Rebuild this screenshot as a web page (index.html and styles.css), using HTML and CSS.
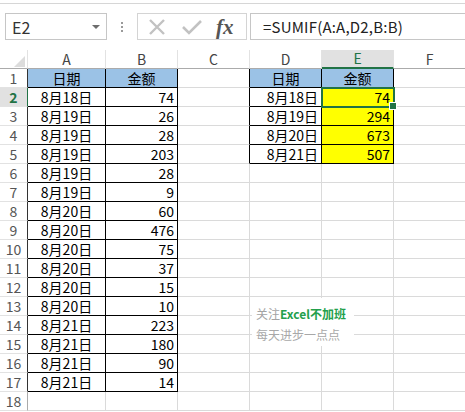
FILE: index.html
```html
<!DOCTYPE html>
<html>
<head>
<meta charset="utf-8">
<link rel="stylesheet" href="styles.css">
</head>
<body>
<div class="topline"></div>
<div class="fbar">
  <div class="namebox"><span>E2</span><svg width="8" height="6" viewBox="0 0 8 6"><path d="M0 1h8L4 5z" fill="#6d6d6d"/></svg></div>
  <div class="dots"><i></i><i></i><i></i></div>
  <div class="fbtns">
    <svg width="20" height="16" viewBox="0 0 20 16"><path d="M3 1l14 14M17 1L3 15" stroke="#c2c2c2" stroke-width="2.4" fill="none"/></svg>
    <svg width="22" height="16" viewBox="0 0 22 16"><path d="M2 8l6 6L20 2" stroke="#c2c2c2" stroke-width="2.6" fill="none"/></svg>
    <span class="fx">fx</span>
  </div>
  <div class="formula">=SUMIF(A:A,D2,B:B)</div>
</div>
<table class="sheet">
  <colgroup><col class="w0"><col class="wa"><col class="wn"><col class="wn"><col class="wn"><col class="wn"><col class="wn"></colgroup>
  <tr class="hrow"><td class="corner"><svg width="11" height="11" viewBox="0 0 11 11"><path d="M11 0v11H0z" fill="#dcdcdc"/></svg></td><td class="ch">A</td><td class="ch">B</td><td class="ch">C</td><td class="ch">D</td><td class="ch csel">E</td><td class="ch">F</td></tr>
  <tr><td class="rh kr">1</td><td class="k hd">日期</td><td class="k hd">金额</td><td class="kr"></td><td class="k hd">日期</td><td class="k hd">金额</td><td></td></tr>
  <tr><td class="rh rsel">2</td><td class="k c">8月18日</td><td class="k r">74</td><td class="kr"></td><td class="k r">8月18日</td><td class="k r y cur">74</td><td></td></tr>
  <tr><td class="rh kr">3</td><td class="k c">8月19日</td><td class="k r">26</td><td class="kr"></td><td class="k r">8月19日</td><td class="k r y">294</td><td></td></tr>
  <tr><td class="rh kr">4</td><td class="k c">8月19日</td><td class="k r">28</td><td class="kr"></td><td class="k r">8月20日</td><td class="k r y">673</td><td></td></tr>
  <tr><td class="rh kr">5</td><td class="k c">8月19日</td><td class="k r">203</td><td class="kr"></td><td class="k r">8月21日</td><td class="k r y">507</td><td></td></tr>
  <tr><td class="rh kr">6</td><td class="k c">8月19日</td><td class="k r">28</td><td></td><td></td><td></td><td></td></tr>
  <tr><td class="rh kr">7</td><td class="k c">8月19日</td><td class="k r">9</td><td></td><td></td><td></td><td></td></tr>
  <tr><td class="rh kr">8</td><td class="k c">8月20日</td><td class="k r">60</td><td></td><td></td><td></td><td></td></tr>
  <tr><td class="rh kr">9</td><td class="k c">8月20日</td><td class="k r">476</td><td></td><td></td><td></td><td></td></tr>
  <tr><td class="rh kr">10</td><td class="k c">8月20日</td><td class="k r">75</td><td></td><td></td><td></td><td></td></tr>
  <tr><td class="rh kr">11</td><td class="k c">8月20日</td><td class="k r">37</td><td></td><td></td><td></td><td></td></tr>
  <tr><td class="rh kr">12</td><td class="k c">8月20日</td><td class="k r">15</td><td></td><td></td><td></td><td></td></tr>
  <tr><td class="rh kr">13</td><td class="k c">8月20日</td><td class="k r">10</td><td></td><td></td><td></td><td></td></tr>
  <tr><td class="rh kr">14</td><td class="k c">8月21日</td><td class="k r">223</td><td></td><td></td><td></td><td></td></tr>
  <tr><td class="rh kr">15</td><td class="k c">8月21日</td><td class="k r">180</td><td></td><td></td><td></td><td></td></tr>
  <tr><td class="rh kr">16</td><td class="k c">8月21日</td><td class="k r">90</td><td></td><td></td><td></td><td></td></tr>
  <tr><td class="rh kr">17</td><td class="k c">8月21日</td><td class="k r">14</td><td></td><td></td><td></td><td></td></tr>
  <tr><td class="rh">18</td><td></td><td></td><td></td><td></td><td></td><td></td></tr>
</table>
<div class="watermark">
  <div class="wm1">关注<b>Excel不加班</b></div>
  <div class="wm2">每天进步一点点</div>
</div>
</body>
</html>
```
FILE: styles.css
```css
* { box-sizing: border-box; }
html, body { margin: 0; padding: 0; background: #fff; overflow: hidden; }
body {
  width: 465px;
  height: 412px;
  position: relative;
  font-family: "Noto Sans CJK SC", "Noto Sans", sans-serif;
  color: #000;
}
.topline { height: 4px; border-bottom: 1px solid #d6d6d6; }
.fbar {
  display: flex;
  align-items: center;
  margin-top: 9px;
  height: 27px;
}
.namebox {
  margin-left: 5px;
  width: 102px;
  height: 27px;
  border: 1px solid #c6c6c6;
  display: flex;
  align-items: center;
  justify-content: space-between;
  padding: 0 6px 0 6px;
  font-size: 16px;
  color: #333;
}
.dots {
  width: 30px;
  display: flex;
  flex-direction: column;
  align-items: center;
  gap: 2px;
}
.dots i { width: 2px; height: 2px; background: #9a9a9a; display: block; }
.fbtns {
  width: 110px;
  height: 27px;
  border: 1px solid #d4d4d4;
  display: flex;
  align-items: center;
  padding-left: 9px;
  gap: 14px;
}
.fx {
  font-family: "Liberation Serif", serif;
  font-style: italic;
  font-weight: bold;
  font-size: 21px;
  color: #555;
  line-height: 20px;
  margin-left: -1px;
}
.formula {
  margin-left: 3px;
  flex: 1;
  height: 27px;
  border: 1px solid #c6c6c6;
  border-right: none;
  padding-left: 12px;
  font-size: 15px;
  letter-spacing: 0.2px;
  line-height: 25px;
  color: #222;
  white-space: nowrap;
}
.sheet {
  margin-top: 10px;
  border-collapse: separate;
  border-spacing: 0;
  table-layout: fixed;
  width: 466px;
}
.w0 { width: 28px; }
.wa { width: 78px; }
.wn { width: 72px; }
.sheet td {
  height: 19px;
  padding: 0 3px;
  border-right: 1px solid #dadada;
  border-bottom: 1px solid #dadada;
  font-size: 14px;
  line-height: 17px;
  white-space: nowrap;
  vertical-align: middle;
}
.sheet tr { height: 19px; }
.hrow td {
  border-right-color: #e2e2e2;
  border-bottom: 1px solid #ababab;
  color: #444;
  text-align: center;
  font-size: 14px;
}
.corner { text-align: right !important; vertical-align: bottom !important; padding: 0 2px 1px 0 !important; line-height: 0 !important; }
.ch.csel { background: #e1e1e1; color: #217346; border-bottom: 2px solid #217346; }
.sheet td.rh {
  color: #555;
  text-align: center;
  padding: 0;
  border-right-color: #ababab;
  border-bottom-color: #e2e2e2;
}
.sheet td.rh.kr { border-right-color: #333; }
.sheet td.rsel {
  background: #e1e1e1;
  color: #217346;
  font-weight: bold;
  border-right: 1px solid #217346;
}
.sheet td.k { border-right-color: #000; border-bottom-color: #000; }
.sheet td.kr { border-right-color: #000; }
.hd { background: #9bc2e6; text-align: center; }
.c { text-align: center; }
.r { text-align: right; }
.y { background: #ffff00; }
.cur {
  position: relative;
  outline: 2px solid #217346;
  outline-offset: -1px;
}
.cur::after {
  content: "";
  position: absolute;
  right: -4px;
  bottom: -4px;
  width: 6px;
  height: 6px;
  background: #217346;
  border: 1px solid #fff;
}
.watermark {
  position: absolute;
  left: 252px;
  top: 298px;
  width: 102px;
  height: 48px;
  background: #fff;
  padding: 5px 0 0 4px;
  font-size: 12px;
  line-height: 21px;
  white-space: nowrap;
}
.wm1 { color: #a3a3a3; }
.wm1 b { color: #23a04c; font-weight: bold; }
.wm2 { color: #a8a8a8; }
```
